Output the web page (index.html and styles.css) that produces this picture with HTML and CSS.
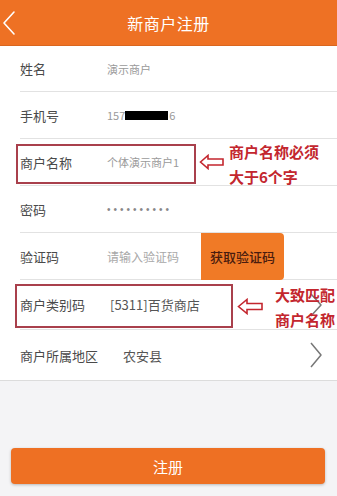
FILE: index.html
```html
<!DOCTYPE html>
<html lang="zh-CN">
<head>
    <meta charset="UTF-8">
    <meta name="viewport" content="width=device-width, initial-scale=1.0">
    <title>新商户注册</title>
    <link rel="stylesheet" href="styles.css">
</head>
<body>

<div class="topbar">
    <svg class="back" width="14" height="26" viewBox="0 0 14 26">
        <polyline points="12,2 2,13 12,24" fill="none" stroke="#fff" stroke-width="1.6" stroke-linecap="round" stroke-linejoin="round"/>
    </svg>
    <h1>新商户注册</h1>
</div>

<div class="form">
    <div class="row row-first">
        <span class="label">姓名</span>
        <span class="value">演示商户</span>
    </div>
    <div class="row">
        <span class="label">手机号</span>
        <span class="value">157<span class="mask"></span>6</span>
    </div>
    <div class="row">
        <span class="label">商户名称</span>
        <span class="value">个体演示商户1</span>
        <div class="mark mark-name"></div>
        <svg class="arrow arrow-name" width="26" height="16" viewBox="0 0 26 16">
            <polygon points="1.5,8 9,1.5 9,5 24,5 24,11 9,11 9,14.5" fill="#fff" stroke="#c3262e" stroke-width="1.6" stroke-linejoin="miter"/>
        </svg>
        <div class="note note-name">商户名称必须<br>大于6个字</div>
    </div>
    <div class="row">
        <span class="label">密码</span>
        <span class="value dots">••••••••••</span>
    </div>
    <div class="row">
        <span class="label">验证码</span>
        <span class="value hint">请输入验证码</span>
        <button class="code-btn" type="button">获取验证码</button>
    </div>
    <div class="row row-tall">
        <span class="label">商户类别码</span>
        <span class="value strong">[5311]百货商店</span>
        <svg class="chevron" width="14" height="26" viewBox="0 0 14 26">
            <polyline points="2,2 12,13 2,24" fill="none" stroke="#777" stroke-width="1.5" stroke-linejoin="round"/>
        </svg>
        <div class="mark mark-type"></div>
        <svg class="arrow arrow-type" width="27" height="17" viewBox="0 0 27 17">
            <polygon points="1.5,8.5 10,1.5 10,5.5 25,5.5 25,11.5 10,11.5 10,15.5" fill="#fff" stroke="#c3262e" stroke-width="1.6"/>
        </svg>
        <div class="note note-type">大致匹配<br>商户名称</div>
    </div>
    <div class="row row-tall row-last">
        <span class="label">商户所属地区</span>
        <span class="value strong region">农安县</span>
        <svg class="chevron" width="14" height="28" viewBox="0 0 14 28">
            <polyline points="2,2 12,14 2,26" fill="none" stroke="#777" stroke-width="1.5" stroke-linejoin="round"/>
        </svg>
    </div>
</div>

<div class="footer">
    <button class="submit" type="button">注册</button>
</div>

</body>
</html>
```

FILE: styles.css
```css
body {
    margin: 0;
    width: 337px;
    height: 496px;
    background-color: #f4f4f6;
    font-family: "Noto Sans CJK SC", "Liberation Sans", sans-serif;
    overflow: hidden;
}
.topbar {
    position: relative;
    height: 46px;
    background-color: #ee7124;
    border-bottom: 1px solid #d9661f;
    box-sizing: border-box;
    display: flex;
    align-items: center;
    justify-content: center;
}
.topbar .back {
    position: absolute;
    left: 2px;
    top: 10px;
}
.topbar h1 {
    margin: 0;
    font-size: 16px;
    font-weight: normal;
    color: #fff;
    letter-spacing: 0.5px;
}
.form {
    background: #fff;
    border-bottom: 1px solid #dcdcdc;
}
.row {
    position: relative;
    height: 47px;
    margin-left: 20px;
    border-bottom: 1px solid #e2e2e2;
    box-sizing: border-box;
    display: flex;
    align-items: center;
}
.row-first {
    height: 46px;
}
.row-tall {
    height: 50px;
}
.row-last {
    border-bottom: none;
}
.label {
    width: 87px;
    flex-shrink: 0;
    font-size: 13px;
    color: #4a4a4a;
}
.value {
    font-size: 11px;
    color: #9a9a9a;
    display: flex;
    align-items: center;
}
.value.hint {
    font-size: 12px;
    color: #a8a8a8;
}
.value.dots {
    font-family: "Liberation Sans", sans-serif;
    font-size: 10px;
    letter-spacing: 3px;
    color: #888;
}
.value.strong {
    font-size: 13px;
    color: #555;
    margin-left: 3px;
}
.value.region {
    margin-left: 16px;
}
.mask {
    display: inline-block;
    width: 43px;
    height: 9px;
    background: #000;
    margin-right: 1px;
}
.code-btn {
    position: absolute;
    left: 181px;
    top: 0;
    width: 83px;
    height: 47px;
    border: none;
    border-radius: 0 4px 4px 0;
    background-color: #f07a26;
    color: #4a1c0e;
    font-family: inherit;
    font-size: 13px;
    font-weight: 500;
    padding: 0;
}
.chevron {
    position: absolute;
    right: 14px;
}
.mark {
    position: absolute;
    border: 2px solid #a9404c;
    box-sizing: border-box;
}
.mark-name {
    left: -4px;
    top: 5px;
    width: 180px;
    height: 40px;
}
.mark-type {
    left: -5px;
    top: 4px;
    width: 218px;
    height: 44px;
}
.arrow {
    position: absolute;
}
.arrow-name {
    left: 179px;
    top: 15px;
}
.arrow-type {
    left: 217px;
    top: 18px;
}
.note {
    position: absolute;
    color: #c3262e;
    font-size: 15px;
    font-weight: bold;
    line-height: 25px;
    white-space: nowrap;
}
.note-name {
    left: 209px;
    top: 0;
}
.note-type {
    left: 255px;
    top: 2px;
}
.footer {
    padding: 67px 12px 0 11px;
}
.submit {
    width: 100%;
    height: 36px;
    border: none;
    border-radius: 4px;
    background-color: #ee7023;
    color: #fff;
    font-family: inherit;
    font-size: 15px;
    box-shadow: 0 1px 3px rgba(0, 0, 0, 0.25);
}
```
